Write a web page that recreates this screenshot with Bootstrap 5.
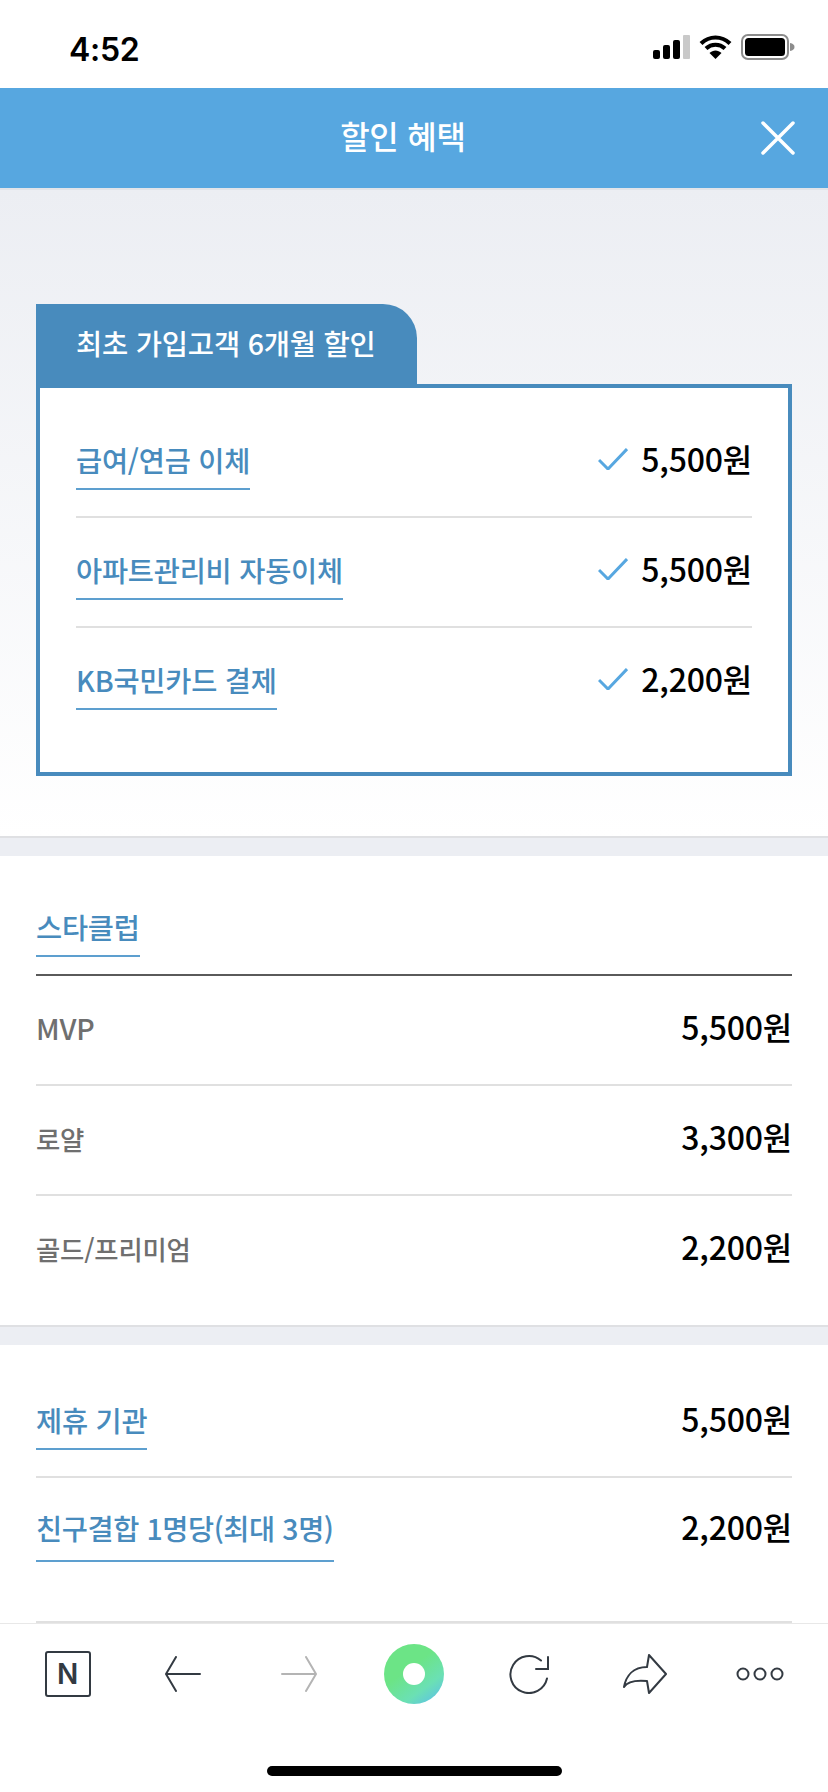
<!DOCTYPE html>
<html lang="ko">
<head>
<meta charset="utf-8">
<title>할인 혜택</title>
<link href="https://cdn.jsdelivr.net/npm/bootstrap@5.3.0/dist/css/bootstrap.min.css" rel="stylesheet">
<style>
html,body{margin:0;background:#fff}
.phone{width:828px;height:1792px;overflow:hidden;font-family:"Noto Sans CJK KR","Noto Sans",sans-serif;font-weight:500;letter-spacing:-.2px}
.stat{height:88px;padding:34px 33px 0 69px;background:#fff;flex:none}
.clock{font-family:Inter,"Liberation Sans",sans-serif;font-weight:600;font-size:32px;line-height:32px;letter-spacing:-.3px;color:#000}
.sticons{gap:9px}
.head{height:100px;background:#57a7e0;color:#fff;display:grid;grid-template-columns:1fr auto 1fr;align-items:center;padding:0 33px;flex:none}
.head h1{font-size:32px;font-weight:500;margin:-6px 22px 0 0;line-height:40px}
.closer{justify-self:end;display:block}
.main{flex:1 1 0;min-height:0;overflow:hidden}
.promo{height:648px;border-top:2px solid #e2e4e9;background:linear-gradient(#eceef3,#fff);padding:114px 36px 0}
.tabby{width:381px;height:84px;margin-bottom:-4px;background:#488bbd;color:#fff;border-top-right-radius:34px;font-size:28.500px;line-height:36px;padding:21px 0 0 40px;white-space:nowrap}
.boxy{height:392px;border:4px solid #488bbd;background:#fff;padding:20px 36px 0;position:relative}
.line{height:110px;display:flex;justify-content:space-between;align-items:flex-start;border-bottom:2px solid #e0e0e0;padding-top:34px}
.line.last{border-bottom:0}
.term{font-size:28.400px;line-height:36px;color:#488bbd;padding-bottom:10px;border-bottom:2px solid #5d9fcf;white-space:nowrap}
.amt{font-size:32px;line-height:36px;color:#000;margin-top:-2px;white-space:nowrap;display:flex;align-items:center}
.amt svg{margin-right:13px;margin-top:2px}
.gap{height:20px;background:#eceef3;border-top:2px solid #dfe0e3}
.sect{padding:53px 36px 0;background:#fff;height:469px}
.sect .line{padding-top:34px;height:110px}
.sect .term-wrap{border-bottom:2px solid #5a5a5a;padding-bottom:17px}
.sect .term{display:inline-block}
.grey{font-size:26.400px;line-height:36px;color:#6f6f6f;margin-top:1px}
.grey.latin{font-size:28.500px;margin-top:0}
.sect2{padding:0 36px;height:278px;background:#fff}
.sect2 .line.one{height:133px;padding-top:57px}
.sect2 .line.two{height:145px;padding-top:32px}
.sect2 .line.two .term{padding-bottom:14px;letter-spacing:-.4px}
.nav7{flex:none;height:169px;background:#fff;border-top:1px solid #e8e8e8;padding:0 10px}
.cols{display:grid;grid-template-columns:repeat(7,1fr);height:100px;align-items:center}
.cols>div{display:flex;justify-content:center;align-items:center}
.nlogo{width:46px;height:46px;border:2px solid #333a42;border-radius:3px;font-family:Inter,"Liberation Sans",sans-serif;font-weight:600;font-size:28px;line-height:1;color:#333a42;display:flex;align-items:center;justify-content:center;letter-spacing:0}
.homebar{width:295px;height:10px;border-radius:5px;background:#000;margin:42px auto 0}
</style>
</head>
<body>
<div class="phone d-flex flex-column">
  <div class="stat d-flex justify-content-between align-items-start">
    <div class="clock">4:52</div>
    <div class="d-flex align-items-center sticons">
      <svg width="37" height="24" viewBox="0 0 37 24"><rect x="0" y="15" width="7" height="9" rx="2" fill="#000"/><rect x="10" y="10" width="7" height="14" rx="2" fill="#000"/><rect x="20" y="5" width="7" height="19" rx="2" fill="#000"/><rect x="30" y="0" width="7" height="24" rx="1" fill="#c9c9c9"/></svg>
      <svg width="33" height="24" viewBox="0 0 33 24"><path d="M2 8.500C10.500 0.500 22.500 0.500 31 8.500M7 13.500C12.500 8.500 20.500 8.500 26 13.500" fill="none" stroke="#000" stroke-width="4.200"/><path d="M16.500 24L10.500 18C14 14.500 19 14.500 22.500 18Z" fill="#000"/></svg>
      <svg width="54" height="26" viewBox="0 0 54 26"><rect x="1" y="1" width="46" height="24" rx="6" fill="none" stroke="#8c8c8c" stroke-width="2"/><rect x="4" y="4" width="40" height="18" rx="3.500" fill="#000"/><path d="M49 9c3 .5 4.500 2 4.500 4s-1.500 3.500-4.500 4z" fill="#8c8c8c"/></svg>
    </div>
  </div>
  <header class="head">
    <span></span>
    <h1>할인 혜택</h1>
    <svg class="closer" width="34" height="34" viewBox="0 0 34 34"><path d="M2 2L32 32M32 2L2 32" stroke="#fff" stroke-width="3.500" stroke-linecap="round"/></svg>
  </header>
  <main class="main">
    <section class="promo">
      <div class="tabby">최초 가입고객 6개월 할인</div>
      <div class="boxy">
        <div class="line"><span class="term">급여/연금 이체</span><span class="amt"><svg width="30" height="22" viewBox="0 0 30 22"><path d="M1 12L10 21L29 1" fill="none" stroke="#57a7e0" stroke-width="3"/></svg>5,500원</span></div>
        <div class="line"><span class="term">아파트관리비 자동이체</span><span class="amt"><svg width="30" height="22" viewBox="0 0 30 22"><path d="M1 12L10 21L29 1" fill="none" stroke="#57a7e0" stroke-width="3"/></svg>5,500원</span></div>
        <div class="line last"><span class="term">KB국민카드 결제</span><span class="amt"><svg width="30" height="22" viewBox="0 0 30 22"><path d="M1 12L10 21L29 1" fill="none" stroke="#57a7e0" stroke-width="3"/></svg>2,200원</span></div>
      </div>
    </section>
    <div class="gap"></div>
    <section class="sect">
      <div class="term-wrap"><span class="term">스타클럽</span></div>
      <div class="line"><span class="grey latin">MVP</span><span class="amt">5,500원</span></div>
      <div class="line"><span class="grey">로얄</span><span class="amt">3,300원</span></div>
      <div class="line last"><span class="grey">골드/프리미엄</span><span class="amt">2,200원</span></div>
    </section>
    <div class="gap"></div>
    <section class="sect2">
      <div class="line one"><span class="term">제휴 기관</span><span class="amt">5,500원</span></div>
      <div class="line two"><span class="term">친구결합 1명당(최대 3명)</span><span class="amt">2,200원</span></div>
    </section>
  </main>
  <nav class="nav7">
    <div class="cols">
      <div><span class="nlogo">N</span></div>
      <div><svg width="36" height="36" viewBox="0 0 36 36"><path d="M35 18H2M11 1L1 18L11 35" fill="none" stroke="#333a42" stroke-width="2" stroke-linejoin="round" stroke-linecap="round"/></svg></div>
      <div><svg width="36" height="36" viewBox="0 0 36 36"><path d="M1 18H34M25 1L35 18L25 35" fill="none" stroke="#b4b4b4" stroke-width="2" stroke-linejoin="round" stroke-linecap="round"/></svg></div>
      <div><svg width="60" height="60" viewBox="0 0 60 60"><defs><linearGradient id="grn" x1=".3" y1=".2" x2=".85" y2=".95"><stop offset=".25" stop-color="#6ce486"/><stop offset=".7" stop-color="#6be0b4"/><stop offset="1" stop-color="#5fc6e0"/></linearGradient></defs><circle cx="30" cy="30" r="30" fill="url(#grn)"/><circle cx="30" cy="30" r="11" fill="#fff"/></svg></div>
      <div><svg width="40" height="40" viewBox="0 0 40 40"><path d="M38 24.500A18.500 18.500 0 1 1 32 6.500" fill="none" stroke="#333a42" stroke-width="2" stroke-linecap="round"/><path d="M39 3V15H27" fill="none" stroke="#333a42" stroke-width="2" stroke-linecap="round"/></svg></div>
      <div><svg width="44" height="40" viewBox="0 0 44 40"><path d="M26 1L43 20L26 39L24 27C13 26 4 28 1 33C3 22 10 13 24 13Z" fill="none" stroke="#333a42" stroke-width="2" stroke-linejoin="round"/></svg></div>
      <div><svg width="48" height="14" viewBox="0 0 48 14"><circle cx="7" cy="7" r="5.500" fill="none" stroke="#333a42" stroke-width="2"/><circle cx="24" cy="7" r="5.500" fill="none" stroke="#333a42" stroke-width="2"/><circle cx="41" cy="7" r="5.500" fill="none" stroke="#333a42" stroke-width="2"/></svg></div>
    </div>
    <div class="homebar"></div>
  </nav>
</div>
<script src="https://cdn.jsdelivr.net/npm/bootstrap@5.3.0/dist/js/bootstrap.bundle.min.js"></script>
</body>
</html>
